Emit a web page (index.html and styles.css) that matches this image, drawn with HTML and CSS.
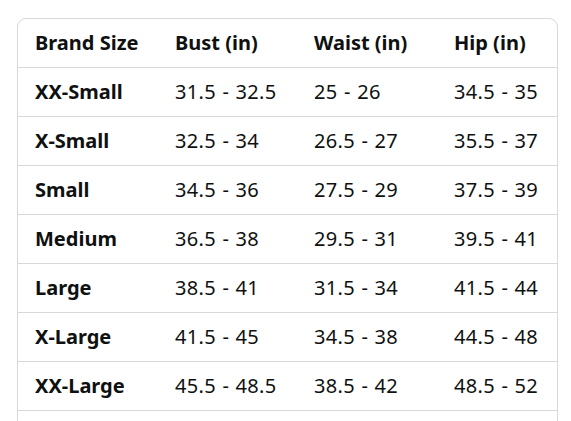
FILE: index.html
```html
<!DOCTYPE html>
<html>
<head>
<meta charset="utf-8">
<link rel="stylesheet" href="styles.css">
</head>
<body>
<div class="wrap">
  <table class="size-table">
    <colgroup>
      <col class="c1"><col class="c2"><col class="c3"><col class="c4">
    </colgroup>
    <thead>
      <tr><th>Brand Size</th><th>Bust (in)</th><th>Waist (in)</th><th>Hip (in)</th></tr>
    </thead>
    <tbody>
      <tr><th>XX-Small</th><td>31.5 - 32.5</td><td>25 - 26</td><td>34.5 - 35</td></tr>
      <tr><th>X-Small</th><td>32.5 - 34</td><td>26.5 - 27</td><td>35.5 - 37</td></tr>
      <tr><th>Small</th><td>34.5 - 36</td><td>27.5 - 29</td><td>37.5 - 39</td></tr>
      <tr><th>Medium</th><td>36.5 - 38</td><td>29.5 - 31</td><td>39.5 - 41</td></tr>
      <tr><th>Large</th><td>38.5 - 41</td><td>31.5 - 34</td><td>41.5 - 44</td></tr>
      <tr><th>X-Large</th><td>41.5 - 45</td><td>34.5 - 38</td><td>44.5 - 48</td></tr>
      <tr><th>XX-Large</th><td>45.5 - 48.5</td><td>38.5 - 42</td><td>48.5 - 52</td></tr>
      <tr class="empty"><th></th><td></td><td></td><td></td></tr>
    </tbody>
  </table>
</div>
</body>
</html>
```
FILE: styles.css
```css
html, body {
  margin: 0;
  padding: 0;
  background: #ffffff;
  overflow: hidden;
}
body {
  padding: 18px 0 0 17px;
  font-family: "Noto Sans", "DejaVu Sans", sans-serif;
  color: #0f1111;
}
.wrap {
  width: 539px;
  border: 1px solid #d5d9d9;
  border-radius: 9px;
  overflow: hidden;
}
.size-table {
  width: 100%;
  border-collapse: collapse;
  table-layout: fixed;
}
.c1 { width: 140px; }
.c2 { width: 139px; }
.c3 { width: 140px; }
.c4 { width: 120px; }
.size-table th,
.size-table td {
  height: 47px;
  padding: 0 0 1px 17px;
  text-align: left;
  vertical-align: middle;
  font-size: 20px;
  white-space: nowrap;
  border-bottom: 1px solid #d5d9d9;
}
.size-table th {
  font-weight: 700;
}
.size-table td {
  font-weight: 400;
  word-spacing: 1px;
  letter-spacing: 0.3px;
}
```
